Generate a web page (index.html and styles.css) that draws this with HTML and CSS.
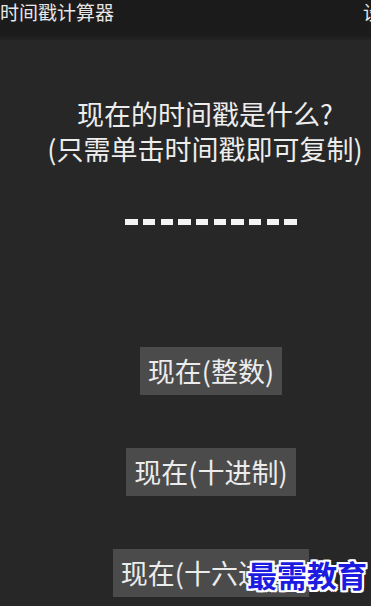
FILE: index.html
```html
<!DOCTYPE html>
<html lang="zh-CN">
<head>
    <meta charset="UTF-8">
    <meta name="viewport" content="width=device-width, initial-scale=1.0">
    <title>时间戳计算器</title>
    <link rel="stylesheet" href="styles.css">
</head>
<body>
    <div class="app">
        <div class="title-bar">
            <span class="title">时间戳计算器</span>
            <span class="menu">设置</span>
        </div>

        <div class="content">
            <div class="question">现在的时间戳是什么?<br>(只需单击时间戳即可复制)</div>

            <div class="stamp" id="stamp">
                <span></span><span></span><span></span><span></span><span></span>
                <span></span><span></span><span></span><span></span><span></span>
            </div>

            <div class="buttons">
                <button class="btn">现在(整数)</button>
                <button class="btn">现在(十进制)</button>
                <button class="btn">现在(十六进制)</button>
            </div>
        </div>

        <div class="watermark">最需教育</div>
    </div>
</body>
</html>
```

FILE: styles.css
```css
body {
    margin: 0;
    background-color: #262726;
    color: #ededed;
    font-family: "Noto Sans CJK SC", "Noto Sans", sans-serif;
    overflow: hidden;
}

.app {
    position: relative;
    width: 371px;
    height: 606px;
    overflow: hidden;
}

.title-bar {
    height: 40px;
    background: linear-gradient(to bottom, #1b1b1b 0, #1c1c1c 36px, #232423 40px);
    display: flex;
    justify-content: space-between;
    white-space: nowrap;
}

.title {
    font-size: 19px;
    line-height: 24px;
    color: #e6e6e6;
}

.menu {
    font-size: 19px;
    line-height: 24px;
    color: #e6e6e6;
    margin-right: -30px;
}

.content {
    padding-left: 39px;
    padding-top: 56px;
    text-align: center;
}

.question {
    font-size: 27px;
    line-height: 35px;
    white-space: nowrap;
}

.stamp {
    display: flex;
    justify-content: center;
    gap: 5.2px;
    margin-top: 53px;
    margin-left: 12px;
}

.stamp span {
    width: 12.5px;
    height: 6px;
    background-color: #f4f4f4;
}

.buttons {
    display: flex;
    flex-direction: column;
    align-items: center;
    gap: 53px;
    margin-top: 122px;
    margin-left: 12px;
}

.btn {
    background-color: #4b4b4b;
    color: #ececec;
    border: none;
    font-family: inherit;
    font-size: 27px;
    line-height: 48px;
    height: 48px;
    padding: 0 8px;
    white-space: nowrap;
}

.watermark {
    position: absolute;
    left: 247px;
    top: 556px;
    font-size: 30px;
    line-height: 36px;
    color: #1c1ce0;
    font-weight: bold;
    text-shadow: -2px 0 #fff, 2px 0 #fff, 0 -2px #fff, 0 2px #fff,
                 -2px -2px #fff, 2px 2px #fff, -2px 2px #fff, 2px -2px #fff;
    white-space: nowrap;
}
```
